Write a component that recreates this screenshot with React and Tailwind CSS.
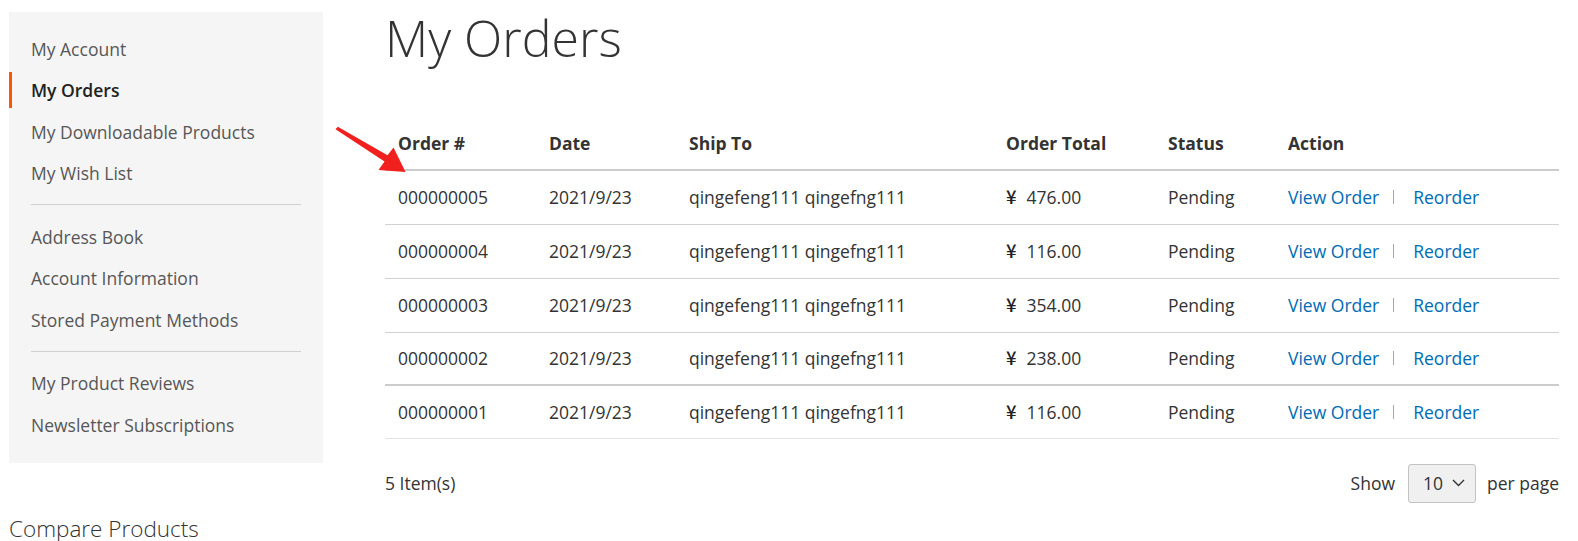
import React from "react";

const orders = [
  { id: "000000005", total: "476.00" },
  { id: "000000004", total: "116.00" },
  { id: "000000003", total: "354.00" },
  { id: "000000002", total: "238.00" },
  { id: "000000001", total: "116.00" },
];

function NavItem({ label, active }) {
  if (active) {
    return (
      <div className="h-[41.5px] flex items-center">
        <div className="h-[36px] border-l-[3px] border-[#ff5501] pl-[19px] flex items-center font-semibold text-[#222]">
          {label}
        </div>
      </div>
    );
  }
  return (
    <div className="h-[41.5px] flex items-center pl-[22px] text-[#575757]">{label}</div>
  );
}

export default function App() {
  return (
    <div
      className="relative w-[1578px] h-[541px] bg-white overflow-hidden text-[17.5px] text-[#333]"
      style={{ fontFamily: '"Open Sans", "Noto Sans CJK SC", sans-serif' }}
    >
      <div className="flex pl-[9px]">
        {/* Sidebar */}
        <div className="w-[314px] flex flex-col">
          <div className="mt-[12px] bg-[#f5f5f5] pt-[16px] pb-[17px]">
            <NavItem label="My Account" />
            <NavItem label="My Orders" active />
            <NavItem label="My Downloadable Products" />
            <NavItem label="My Wish List" />
            <div className="mt-[10px] mb-[11px] ml-[22px] mr-[22px] h-px bg-[#d1d1d1]" />
            <NavItem label="Address Book" />
            <NavItem label="Account Information" />
            <NavItem label="Stored Payment Methods" />
            <div className="mt-[10px] mb-[11px] ml-[22px] mr-[22px] h-px bg-[#d1d1d1]" />
            <NavItem label="My Product Reviews" />
            <NavItem label="Newsletter Subscriptions" />
          </div>
          <div className="mt-[53px] text-[22.5px] leading-[25px] font-light text-[#333]">
            Compare Products
          </div>
        </div>

        {/* Main */}
        <div className="ml-[62px] w-[1174px] pt-[11px]">
          <h1 className="text-[50px] leading-[55px] font-light text-[#333]">My Orders</h1>

          <table className="mt-[52px] w-full table-fixed border-collapse">
            <colgroup>
              <col className="w-[151px]" />
              <col className="w-[140px]" />
              <col className="w-[317px]" />
              <col className="w-[162px]" />
              <col className="w-[120px]" />
              <col />
            </colgroup>
            <thead>
              <tr className="border-b-2 border-[#cccccc] h-[52px]">
                {["Order #", "Date", "Ship To", "Order Total", "Status", "Action"].map((h) => (
                  <th key={h} className="text-left font-bold pl-[13px] align-middle">
                    {h}
                  </th>
                ))}
              </tr>
            </thead>
            <tbody>
              {orders.map((o, i) => (
                <tr
                  key={o.id}
                  className={
                    i === 3
                      ? "h-[53px] border-b-2 border-[#cccccc]"
                      : i === 4
                      ? "h-[53px] border-b border-[#e3e3e3]"
                      : "h-[54px] border-b border-[#d1d1d1]"
                  }
                >
                  <td className="pl-[13px] align-middle">{o.id}</td>
                  <td className="pl-[13px] align-middle">2021/9/23</td>
                  <td className="pl-[13px] align-middle">qingefeng111 qingefng111</td>
                  <td className="pl-[13px] align-middle">
                    <span
                      className="text-[#222] text-[18.5px] font-medium"
                      style={{ fontFamily: '"Noto Sans CJK SC", sans-serif' }}
                    >
                      ¥
                    </span>
                    <span className="ml-[10px]">{o.total}</span>
                  </td>
                  <td className="pl-[13px] align-middle">Pending</td>
                  <td className="pl-[13px] align-middle">
                    <div className="flex items-center">
                      <span className="text-[#006bb4]">View Order</span>
                      <span className="ml-[14px] mr-[19px] w-px h-[14px] bg-[#a6a6a6]" />
                      <span className="text-[#006bb4]">Reorder</span>
                    </div>
                  </td>
                </tr>
              ))}
            </tbody>
          </table>

          <div className="mt-[25px] flex items-center justify-between">
            <div>5 Item(s)</div>
            <div className="flex items-center">
              <span>Show</span>
              <div className="ml-[13px] w-[68px] h-[39px] border border-[#c2c2c2] rounded-[3px] bg-[#f0f0f0] flex items-center pl-[14px]">
                <span>10</span>
                <svg className="ml-[9px]" width="13" height="8" viewBox="0 0 13 8">
                  <polyline points="1,1 6.5,6.5 12,1" fill="none" stroke="#333" strokeWidth="1.4" />
                </svg>
              </div>
              <span className="ml-[11px]">per page</span>
            </div>
          </div>
        </div>
      </div>

      {/* Annotation arrow */}
      <svg className="absolute left-0 top-0 pointer-events-none" width="1578" height="541">
        <polygon
          points="335.5,129.2 337.8,126.8 387.5,155.2 393.5,147.5 405.5,172 378.5,170 384.5,161.5"
          fill="#f21f1f"
        />
      </svg>
    </div>
  );
}
